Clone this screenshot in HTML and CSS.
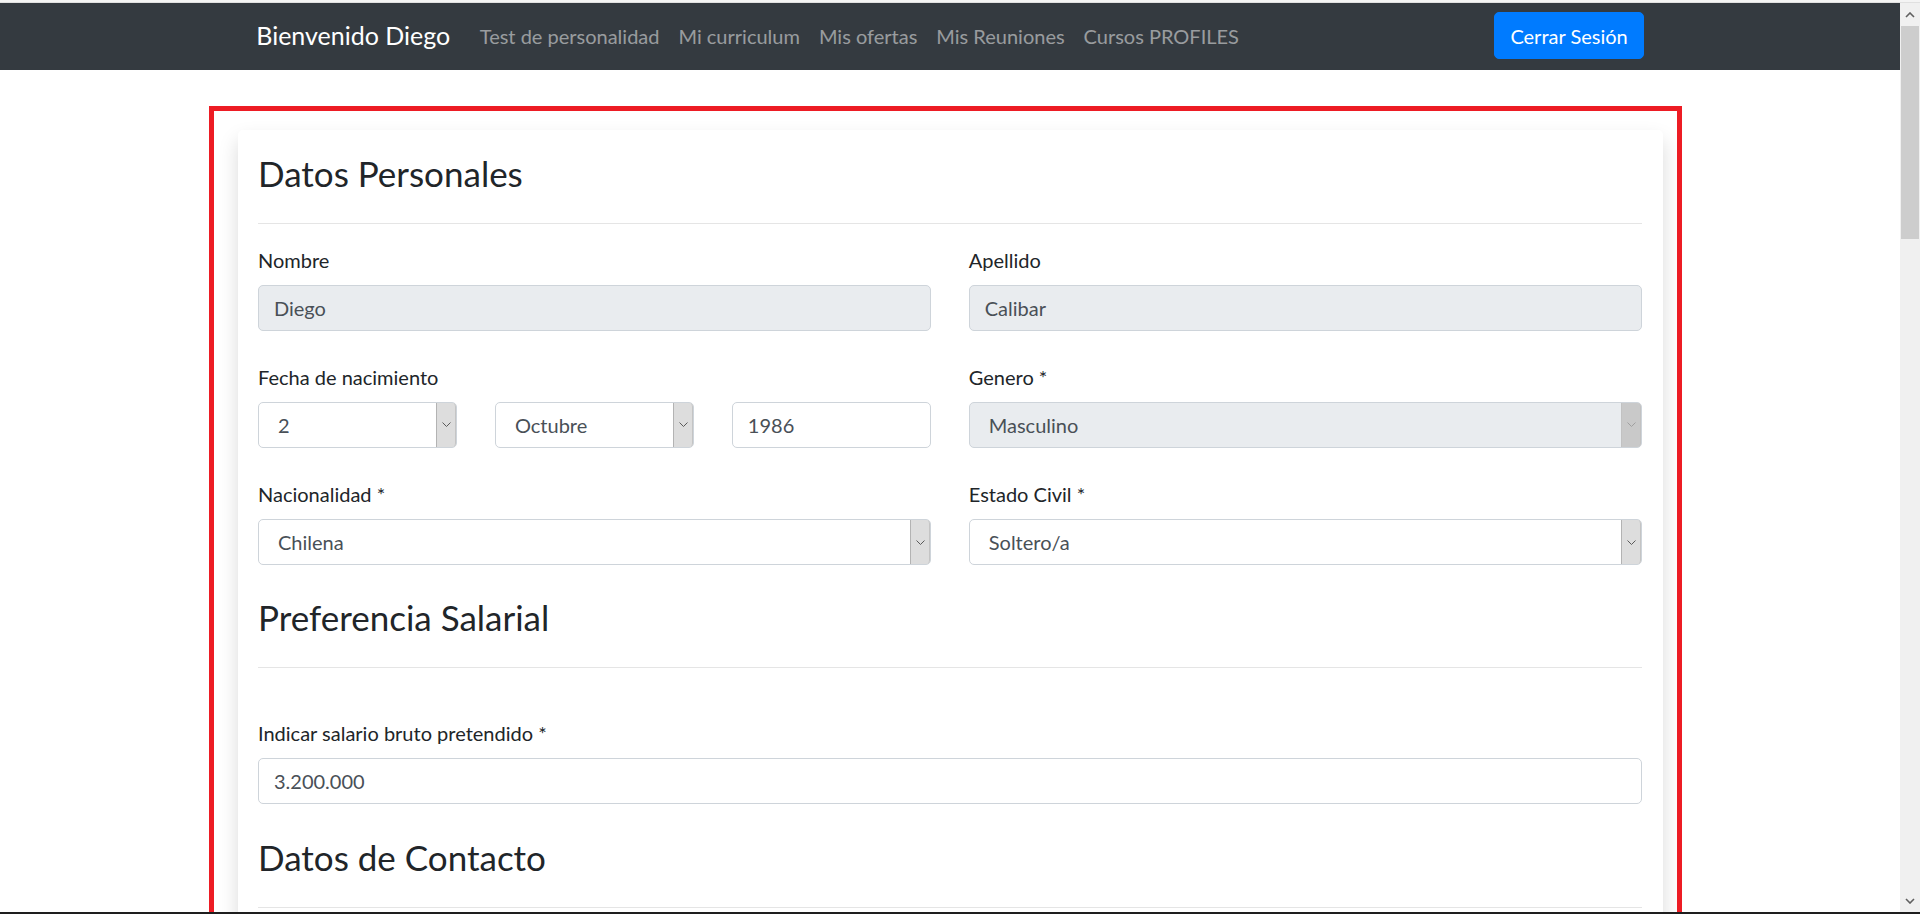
FILE: index.html
```html
<!DOCTYPE html>
<html lang="es">
<head>
<meta charset="utf-8">
<title>Datos Personales</title>
<link rel="stylesheet" href="styles.css">
</head>
<body>
<div class="topstrip"></div>
<div class="window">
  <div class="page">
    <nav class="navbar">
      <div class="nav-inner">
        <a class="brand">Bienvenido Diego</a>
        <ul class="nav-links">
          <li><a>Test de personalidad</a></li>
          <li><a>Mi curriculum</a></li>
          <li><a>Mis ofertas</a></li>
          <li><a>Mis Reuniones</a></li>
          <li><a>Cursos PROFILES</a></li>
        </ul>
        <button class="btn-logout" type="button">Cerrar Sesión</button>
      </div>
    </nav>

    <main class="container">
      <div class="card">
        <div class="card-body">
          <h3 class="section-title">Datos Personales</h3>
          <hr class="divider">

          <div class="grid-2">
            <div class="form-group">
              <label class="form-label">Nombre</label>
              <input class="form-control is-disabled" value="Diego" readonly>
            </div>
            <div class="form-group">
              <label class="form-label">Apellido</label>
              <input class="form-control is-disabled" value="Calibar" readonly>
            </div>

            <div class="form-group">
              <label class="form-label">Fecha de nacimiento</label>
              <div class="grid-3">
                <div class="select-wrap">
                  <select class="form-control form-select"><option>2</option></select>
                  <span class="select-arrow"><svg width="9" height="5" viewBox="0 0 9 5"><polyline points="0.5,0.5 4.5,4.5 8.5,0.5" fill="none" stroke="#5a5a5a" stroke-width="1"/></svg></span>
                </div>
                <div class="select-wrap">
                  <select class="form-control form-select"><option>Octubre</option></select>
                  <span class="select-arrow"><svg width="9" height="5" viewBox="0 0 9 5"><polyline points="0.5,0.5 4.5,4.5 8.5,0.5" fill="none" stroke="#5a5a5a" stroke-width="1"/></svg></span>
                </div>
                <input class="form-control" value="1986">
              </div>
            </div>
            <div class="form-group">
              <label class="form-label">Genero *</label>
              <div class="select-wrap">
                <select class="form-control form-select is-disabled"><option>Masculino</option></select>
                <span class="select-arrow arrow-disabled"><svg width="9" height="5" viewBox="0 0 9 5"><polyline points="0.5,0.5 4.5,4.5 8.5,0.5" fill="none" stroke="#a0a0a0" stroke-width="1"/></svg></span>
              </div>
            </div>

            <div class="form-group">
              <label class="form-label">Nacionalidad *</label>
              <div class="select-wrap">
                <select class="form-control form-select"><option>Chilena</option></select>
                <span class="select-arrow"><svg width="9" height="5" viewBox="0 0 9 5"><polyline points="0.5,0.5 4.5,4.5 8.5,0.5" fill="none" stroke="#5a5a5a" stroke-width="1"/></svg></span>
              </div>
            </div>
            <div class="form-group">
              <label class="form-label">Estado Civil *</label>
              <div class="select-wrap">
                <select class="form-control form-select"><option>Soltero/a</option></select>
                <span class="select-arrow"><svg width="9" height="5" viewBox="0 0 9 5"><polyline points="0.5,0.5 4.5,4.5 8.5,0.5" fill="none" stroke="#5a5a5a" stroke-width="1"/></svg></span>
              </div>
            </div>
          </div>

          <h3 class="section-title">Preferencia Salarial</h3>
          <hr class="divider divider-wide">
          <div class="form-group">
            <label class="form-label">Indicar salario bruto pretendido *</label>
            <input class="form-control" value="3.200.000">
          </div>

          <h3 class="section-title">Datos de Contacto</h3>
          <hr class="divider">
        </div>
      </div>
    </main>

    <div class="annotation"></div>
  </div>

  <div class="scrollbar">
    <div class="sb-btn"><svg width="10" height="6" viewBox="0 0 10 6"><polyline points="1,5 5,1 9,5" fill="none" stroke="#606060" stroke-width="1.6"/></svg></div>
    <div class="sb-thumb"></div>
    <div class="sb-track"></div>
    <div class="sb-btn"><svg width="10" height="6" viewBox="0 0 10 6"><polyline points="1,1 5,5 9,1" fill="none" stroke="#606060" stroke-width="1.6"/></svg></div>
  </div>
</div>
<div class="bottomline"></div>
</body>
</html>
```

FILE: styles.css
```css
* { box-sizing: border-box; }

html, body { margin: 0; }

body {
  height: 914px;
  overflow: hidden;
  display: flex;
  flex-direction: column;
  background: #fff;
  color: #212529;
  font-family: Lato, "Liberation Sans", sans-serif;
}

.topstrip {
  flex: none;
  height: 3px;
  background: #f4f4f4;
  border-bottom: 1px solid #e0e0e0;
}

.window {
  flex: 1;
  min-height: 0;
  display: flex;
}

.page {
  flex: 1;
  position: relative;
  overflow: hidden;
  background: #fff;
}

.bottomline {
  flex: none;
  height: 2px;
  background: #1e1e1e;
}

/* scrollbar */
.scrollbar {
  flex: none;
  width: 20px;
  background: #f0f0f0;
  display: flex;
  flex-direction: column;
}
.sb-btn {
  height: 23px;
  display: flex;
  align-items: center;
  justify-content: center;
}
.sb-thumb {
  height: 213px;
  margin: 0 1px;
  background: #cdcdcd;
}
.sb-track { flex: 1; }

/* navbar */
.navbar {
  height: 67px;
  padding: 9px 0 11px;
  background: #343a40;
}
.nav-inner {
  width: 1425px;
  height: 100%;
  margin: 0 auto;
  padding: 0 18.75px;
  display: flex;
  align-items: center;
}
.brand {
  margin-right: 20px;
  font-size: 25px;
  line-height: 37.5px;
  color: #fff;
}
.nav-links {
  display: flex;
  margin: 0;
  padding: 0;
  list-style: none;
}
.nav-links a {
  display: block;
  padding: 0 9.5px;
  font-size: 20px;
  line-height: 30px;
  color: rgba(255, 255, 255, 0.5);
}
.btn-logout {
  margin-left: auto;
  min-width: 149px;
  height: 47px;
  padding: 0 15px;
  font-family: inherit;
  font-size: 20px;
  line-height: 30px;
  color: #fff;
  background: #007bff;
  border: 1px solid #007bff;
  border-radius: 5px;
}

/* card */
.container {
  width: 1425px;
  margin: 59.5px auto 0;
}
.card {
  min-height: 900px;
  background: #fff;
  border-radius: 5px;
  box-shadow: 0 10px 20px rgba(0, 0, 0, 0.15);
}
.card-body {
  padding: 22px 20.5px;
}
.section-title {
  margin: 0 0 29px;
  font-size: 35px;
  line-height: 42px;
  font-weight: 400;
  color: #212529;
}
.divider {
  margin: 0 0 21px;
  border: 0;
  border-top: 1px solid rgba(0, 0, 0, 0.1);
}
.divider-wide { margin-bottom: 50px; }

.grid-2 {
  display: grid;
  grid-template-columns: 1fr 1fr;
  column-gap: 37.5px;
}
.grid-3 {
  display: grid;
  grid-template-columns: repeat(3, 1fr);
  column-gap: 37.5px;
}

.form-group { margin-bottom: 31.3px; }
.form-label {
  display: block;
  margin-bottom: 10px;
  font-size: 20px;
  line-height: 30px;
}
.form-control {
  display: block;
  width: 100%;
  height: 46px;
  margin: 0;
  padding: 0 15px;
  font-family: inherit;
  font-size: 20px;
  color: #495057;
  background: #fff;
  border: 1px solid #ced4da;
  border-radius: 5px;
  outline: none;
}
.form-control.is-disabled { background: #e9ecef; }

.select-wrap { position: relative; }
.form-select {
  -webkit-appearance: none;
  appearance: none;
  padding-left: 19px;
}
.select-arrow {
  position: absolute;
  top: 1px;
  right: 1px;
  bottom: 1px;
  width: 20px;
  display: flex;
  align-items: center;
  justify-content: center;
  background: #dddddd;
  border-left: 1px solid #b3b3b3;
  border-right: 1px solid #c4c4c4;
  border-radius: 0 4px 4px 0;
}
.select-arrow.arrow-disabled {
  background: #c9c9c9;
  border-left-color: #c2c2c2;
  border-right-color: #c2c2c2;
}

/* red annotation frame drawn over the screenshot */
.annotation {
  position: absolute;
  left: 209px;
  top: 103px;
  width: 1473px;
  height: 900px;
  border: 5px solid #ed1c24;
  pointer-events: none;
}
```
